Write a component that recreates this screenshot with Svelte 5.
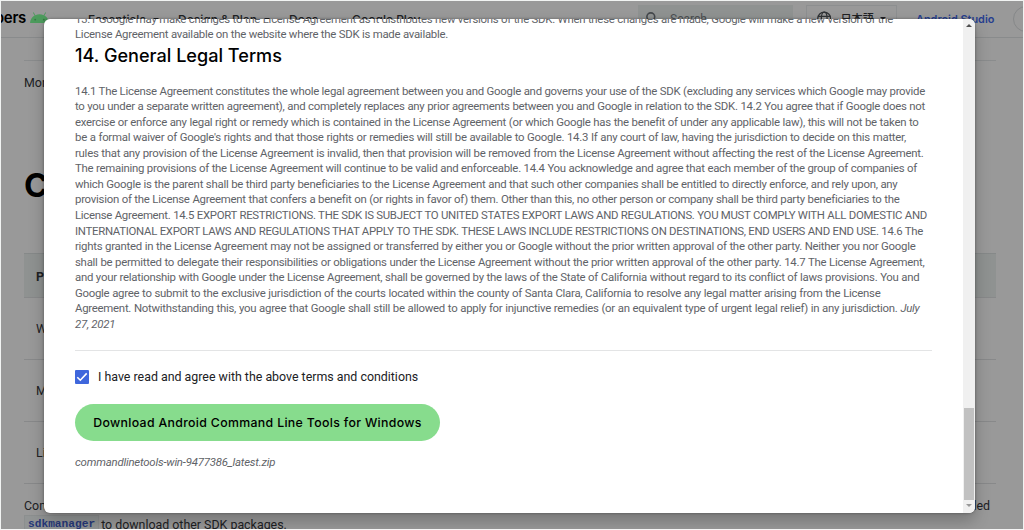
<script>
  const lines = [
    ['14.1 The License Agreement constitutes the whole legal agreement between you and Google and governs your use of the SDK (excluding any services which Google may provide', 850],
    ['to you under a separate written agreement), and completely replaces any prior agreements between you and Google in relation to the SDK. 14.2 You agree that if Google does not', 850],
    ['exercise or enforce any legal right or remedy which is contained in the License Agreement (or which Google has the benefit of under any applicable law), this will not be taken to', 843.5],
    ["be a formal waiver of Google's rights and that those rights or remedies will still be available to Google. 14.3 If any court of law, having the jurisdiction to decide on this matter,", 831],
    ['rules that any provision of the License Agreement is invalid, then that provision will be removed from the License Agreement without affecting the rest of the License Agreement.', 848.5],
    ['The remaining provisions of the License Agreement will continue to be valid and enforceable. 14.4 You acknowledge and agree that each member of the group of companies of', 842],
    ['which Google is the parent shall be third party beneficiaries to the License Agreement and that such other companies shall be entitled to directly enforce, and rely upon, any', 822.5],
    ['provision of the License Agreement that confers a benefit on (or rights in favor of) them. Other than this, no other person or company shall be third party beneficiaries to the', 824.5],
    ['License Agreement. 14.5 EXPORT RESTRICTIONS. THE SDK IS SUBJECT TO UNITED STATES EXPORT LAWS AND REGULATIONS. YOU MUST COMPLY WITH ALL DOMESTIC AND', 852],
    ['INTERNATIONAL EXPORT LAWS AND REGULATIONS THAT APPLY TO THE SDK. THESE LAWS INCLUDE RESTRICTIONS ON DESTINATIONS, END USERS AND END USE. 14.6 The', 848],
    ['rights granted in the License Agreement may not be assigned or transferred by either you or Google without the prior written approval of the other party. Neither you nor Google', 840.5],
    ['shall be permitted to delegate their responsibilities or obligations under the License Agreement without the prior written approval of the other party. 14.7 The License Agreement,', 849.5],
    ['and your relationship with Google under the License Agreement, shall be governed by the laws of the State of California without regard to its conflict of laws provisions. You and', 844.5],
    ['Google agree to submit to the exclusive jurisdiction of the courts located within the county of Santa Clara, California to resolve any legal matter arising from the License', 805.5]
  ];
</script>

<div class="page">
  <header>
    <b class="brand">developers</b>
    <svg class="droid" width="19" height="11" viewBox="0 0 19 11"><path d="M0 11C.3 7.400 2 5 4.600 3.600L2.900.8l.7-.5 1.800 2.900a10 10 0 0 1 8.200 0L15.400.3l.7.5-1.700 2.800C17 5 18.700 7.400 19 11z" fill="#4c9b5c"/><circle cx="5.200" cy="7.600" r=".9" fill="#397346"/><circle cx="13.800" cy="7.600" r=".9" fill="#397346"/></svg>
    <nav>
      <span class="n1">Essentials <i></i></span><span class="n2">Design &amp; Plan <i></i></span><span class="n3">Docs</span><span class="n4">Google Play</span>
    </nav>
    <div class="search"><svg width="12" height="13" viewBox="0 0 12 13" fill="none" stroke="#44484c" stroke-width="1.600"><circle cx="4.800" cy="4.800" r="3.900"/><path d="m7.600 7.600 4 4"/></svg><span>Search</span></div>
    <div class="lang"><svg width="15" height="15" viewBox="0 0 15 15" fill="none" stroke="#303336" stroke-width="1.300"><circle cx="7.500" cy="7.500" r="6.700"/><ellipse cx="7.500" cy="7.500" rx="3" ry="6.700"/><path d="M1 5.200h13M1 9.800h13"/></svg><span>日本語</span><i></i></div>
    <span class="studio">Android Studio</span>
    <div class="avatar"></div>
  </header>
  <main>
    <p class="more">More information</p>
    <h1>Command</h1>
    <div class="table">
      <div class="row head">Platform</div>
      <div class="row">Windows</div>
      <div class="row">Mac</div>
      <div class="row">Linux</div>
    </div>
    <div class="foot"><span>Command-line tools</span><span>included</span></div>
    <div class="foot2"><code>sdkmanager</code><span>to download other SDK packages.</span></div>
  </main>
</div>

<div class="dialog">
  <div class="content">
    <div class="legal prev">
      <div class="line" style:width="818px">13.1 Google may make changes to the License Agreement as it distributes new versions of the SDK. When these changes are made, Google will make a new version of the</div>
      <div class="line" style:width="373px">License Agreement available on the website where the SDK is made available.</div>
    </div>
    <h2>14. General Legal Terms</h2>
    <div class="legal">
      {#each lines as [text, w], i}
        <div class="line" class:caps={i === 8 || i === 9} style:width="{w}px">{text}</div>
      {/each}
      <div class="line" style:width="844.5px">Agreement. Notwithstanding this, you agree that Google shall still be allowed to apply for injunctive remedies (or an equivalent type of urgent legal relief) in any jurisdiction. <em>July</em></div>
      <div class="line" style:width="40px"><em>27, 2021</em></div>
    </div>
    <hr />
    <label><span class="check"><svg width="14" height="14" viewBox="0 0 14 14" fill="none" stroke="#fff" stroke-width="1.600"><path d="m2.300 7.200 3 3 6.400-6.800"/></svg></span><span class="agree">I have read and agree with the above terms and conditions</span></label>
    <button><span>Download Android Command Line Tools for Windows</span></button>
    <p class="zip">commandlinetools-win-9477386_latest.zip</p>
  </div>
  <div class="scroll"><i class="up"></i><div class="thumb"></div><i class="down"></i></div>
</div>
<div class="frame"></div>

<style>
  :global(body) { margin: 0; overflow: hidden; background: #999; }
  * { box-sizing: border-box; }
  .page { width: 1024px; height: 530px; overflow: hidden; background: #999; font-family: Roboto, sans-serif; color: #202124; }
  header { height: 38px; border-bottom: 1px solid #898b8c; display: flex; align-items: flex-start; font-family: Inter, sans-serif; font-weight: 500; font-size: 12px; white-space: nowrap; }
  header > * { flex-shrink: 0; }
  .brand { width: 26px; display: flex; justify-content: flex-end; font-size: 15px; font-weight: 600; line-height: 20px; padding-top: 8px; color: #000; letter-spacing: -.3px; overflow: hidden; }
  .droid { margin: 12px 0 0 4px; }
  nav { width: 589px; display: flex; padding: 11px 0 0 39px; line-height: 17px; }
  .n1 { width: 90px; } .n2 { width: 111px; } .n3 { width: 63px; }
  nav i, .lang i { display: inline-block; border: 3.5px solid transparent; border-top-color: #202124; border-bottom: 0; margin: 0 0 3px 4px; }
  .search { width: 155px; height: 28px; margin-top: 5px; background: #8f9291; display: flex; gap: 12px; padding: 7px 8px; font-family: Roboto, sans-serif; color: #4b4f52; font-weight: 400; line-height: 15px; }
  .lang { width: 91px; height: 28px; margin: 5px 0 0 13px; border: 1px solid #8d8f90; padding: 5px 10px; display: flex; gap: 9px; font-family: "Noto Sans CJK JP", sans-serif; line-height: 15px; font-size: 11.200px; }
  .lang i { height: 4px; margin: 6px 0 0 -3px; }
  .studio { margin: 11px 0 0 19px; width: 79px; line-height: 17px; font-size: 10.900px; font-weight: 600; color: #263f8f; }
  .avatar { margin: 6px 0 0 18px; width: 26px; height: 26px; border: 1px solid #868889; border-radius: 50%; }
  main { margin: 22px 28px 0 24px; border-top: 1px solid #8a8c8d; }
  .more { margin: 13px 0 0; font-size: 12.4px; line-height: 18px; }
  h1 { margin: 73px 0 0; font: 700 33px/40px Inter, sans-serif; color: #000; }
  .table { margin-top: 48px; }
  .row { height: 62px; border-bottom: 1px solid #88898a; padding-left: 12px; font-size: 12.4px; line-height: 61px; }
  .head { height: 45px; line-height: 45px; background: #8f9291; border-top: 1px solid #868989; font-weight: 700; }
  .foot { display: flex; justify-content: space-between; margin-top: 13px; margin-right: -18px; font-size: 12.4px; line-height: 18px; padding-right: 24px; }
  .foot2 { display: flex; align-items: center; height: 18px; margin-top: 0; font-size: 12.4px; }
  code { font: 600 11.200px/17px "Liberation Mono", monospace; background: #929595; border: 1px solid #8c8f8f; padding: 0 3px; margin-right: 2px; color: #26387a; }
  .dialog { position: absolute; left: 44px; top: 19px; width: 931px; height: 494px; background: #fff; border-radius: 6px; overflow: hidden; display: flex; box-shadow: 0 8px 16px rgba(0,0,0,.23), 0 0 3px rgba(0,0,0,.35); font-family: Roboto, sans-serif; }
  .content { width: 919px; padding: 0 31px; }
  .legal { color: #5f6368; font-size: 11.400px; letter-spacing: -.260px; line-height: 15.570px; }
  .caps { letter-spacing: -.290px; }
  .prev { margin-top: -7.100px; }
  .line { height: 15.570px; white-space: nowrap; text-align: justify; text-align-last: justify; }
  h2 { margin: 0 0 16.500px; height: 24px; font: 500 18.100px/24px Inter, sans-serif; color: #000; }
  hr { margin: 17.600px 0 0; border: 0; border-top: 1px solid #e3e4e5; }
  label { display: flex; align-items: center; gap: 9px; height: 18px; margin-top: 17px; font-size: 12.400px; color: #202124; }
  .agree { margin-top: -1px; }
  .check { width: 14px; height: 14px; background: #3f67dc; border-radius: 1px; } .check svg { display: block; }
  button { display: flex; align-items: center; justify-content: center; width: 365px; height: 37px; margin-top: 18px; border: 0; border-radius: 19px; background: #87dc8d; padding: 0; font: 500 12.300px Inter, sans-serif; letter-spacing: .34px; color: #000; }
  .zip { margin: 12.600px 0 0; font-size: 11.400px; letter-spacing: -.2px; line-height: 17px; font-style: italic; color: #5f6368; }
  .scroll { width: 12px; background: #f0f0f0; display: flex; flex-direction: column; align-items: center; }
  .up, .down { border: 3px solid transparent; }
  .up { border-bottom-color: #505050; margin-top: 2px; }
  .thumb { width: 10px; height: 92px; margin-top: 381px; background: #c1c1c1; }
  .down { border-top-color: #999; margin-top: 4px; }
  .frame { position: absolute; inset: 0; border: 1px solid #f1f3f2; border-bottom-color: #f6f6f6; pointer-events: none; }
</style>
